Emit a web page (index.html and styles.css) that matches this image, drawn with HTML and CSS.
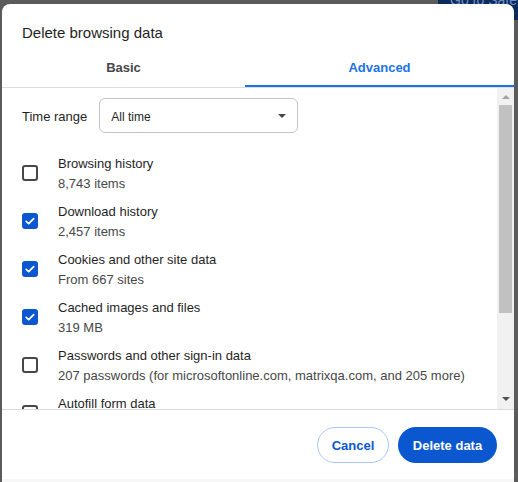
FILE: index.html
```html
<!DOCTYPE html>
<html lang="en">
<head>
    <meta charset="UTF-8" />
    <title>Delete browsing data</title>
    <link rel="stylesheet" href="styles.css">
</head>
<body>
    <div class="behind-button">Go to Safety</div>

    <div class="dialog">
        <h1 class="dialog-title">Delete browsing data</h1>

        <div class="tabs">
            <div class="tab">Basic</div>
            <div class="tab active">Advanced</div>
        </div>

        <div class="body">
            <div class="list">
                <div class="time-range">
                    <span class="time-label">Time range</span>
                    <div class="select">
                        <span>All time</span>
                        <span class="caret"></span>
                    </div>
                </div>

                <div class="item">
                    <span class="checkbox"></span>
                    <div class="item-text">
                        <div class="item-title">Browsing history</div>
                        <div class="item-sub">8,743 items</div>
                    </div>
                </div>
                <div class="item">
                    <span class="checkbox checked"><svg viewBox="0 0 16 16" width="16" height="16"><path d="M4.2 8.3l2.5 2.4 5-5" fill="none" stroke="#fff" stroke-width="1.7" stroke-linecap="round" stroke-linejoin="round"/></svg></span>
                    <div class="item-text">
                        <div class="item-title">Download history</div>
                        <div class="item-sub">2,457 items</div>
                    </div>
                </div>
                <div class="item">
                    <span class="checkbox checked"><svg viewBox="0 0 16 16" width="16" height="16"><path d="M4.2 8.3l2.5 2.4 5-5" fill="none" stroke="#fff" stroke-width="1.7" stroke-linecap="round" stroke-linejoin="round"/></svg></span>
                    <div class="item-text">
                        <div class="item-title">Cookies and other site data</div>
                        <div class="item-sub">From 667 sites</div>
                    </div>
                </div>
                <div class="item">
                    <span class="checkbox checked"><svg viewBox="0 0 16 16" width="16" height="16"><path d="M4.2 8.3l2.5 2.4 5-5" fill="none" stroke="#fff" stroke-width="1.7" stroke-linecap="round" stroke-linejoin="round"/></svg></span>
                    <div class="item-text">
                        <div class="item-title">Cached images and files</div>
                        <div class="item-sub">319 MB</div>
                    </div>
                </div>
                <div class="item">
                    <span class="checkbox"></span>
                    <div class="item-text">
                        <div class="item-title">Passwords and other sign-in data</div>
                        <div class="item-sub">207 passwords (for microsoftonline.com, matrixqa.com, and 205 more)</div>
                    </div>
                </div>
                <div class="item">
                    <span class="checkbox"></span>
                    <div class="item-text">
                        <div class="item-title">Autofill form data</div>
                        <div class="item-sub">&nbsp;</div>
                    </div>
                </div>
            </div>

            <!-- fake scrollbar -->
            <div class="scrollbar">
                <span class="arrow up"></span>
                <div class="track">
                    <div class="thumb"></div>
                </div>
                <span class="arrow down"></span>
            </div>
        </div>

        <div class="footer">
            <button class="btn btn-cancel">Cancel</button>
            <button class="btn btn-delete">Delete data</button>
        </div>
    </div>
</body>
</html>
```

FILE: styles.css
```css
body {
    margin: 0;
    height: 482px;
    overflow: hidden;
    background-color: #5b5b5b;
    font-family: 'Segoe UI', 'Liberation Sans', Arial, sans-serif;
    color: #1f1f1f;
    position: relative;
}

/* page behind the dialog */
.behind-button {
    position: absolute;
    top: -8px;
    right: 0;
    width: 80px;
    height: 28px;
    padding-left: 12px;
    box-sizing: border-box;
    background-color: #0c2a5c;
    color: #6f8fc4;
    font-size: 14px;
    line-height: 16px;
    white-space: nowrap;
    overflow: hidden;
}

.dialog {
    position: relative;
    margin: 4px 0 0 2px;
    width: 512px;
    height: 478px;
    background-color: #fff;
    border-radius: 8px 8px 0 0;
    display: flex;
    flex-direction: column;
    border-bottom: 3px solid #f7f7f7;
    box-sizing: border-box;
}

.dialog-title {
    margin: 0;
    padding: 19px 20px 0;
    font-size: 15px;
    font-weight: normal;
    line-height: 20px;
    color: #1f1f1f;
}

.tabs {
    display: flex;
    border-bottom: 1px solid #dcdcdc;
}

.tab {
    width: 243px;
    text-align: center;
    padding: 15px 0 9px;
    font-size: 13px;
    font-weight: bold;
    line-height: 20px;
    color: #474747;
}

.tab.active {
    flex: 1;
    color: #1a73e8;
    box-shadow: inset 0 -2px 0 #1a73e8;
}

.body {
    height: 321px;
    display: flex;
    border-bottom: 1px solid #dcdcdc;
}

.list {
    flex: 1;
    overflow: hidden;
    padding: 10px 0 0 20px;
}

.time-range {
    display: flex;
    align-items: center;
    gap: 12px;
    font-size: 13px;
    margin-bottom: 19px;
}

.time-label {
    padding-top: 2px;
}

.select {
    width: 199px;
    height: 35px;
    box-sizing: border-box;
    border: 1px solid #c4c4c4;
    border-radius: 6px;
    display: flex;
    align-items: center;
    justify-content: space-between;
    padding: 3px 11px 0 11px;
    font-size: 12px;
}

.caret {
    width: 0;
    height: 0;
    border-left: 4px solid transparent;
    border-right: 4px solid transparent;
    border-top: 4px solid #474747;
    margin-top: -3px;
}

.item {
    display: flex;
    align-items: center;
    gap: 20px;
    margin-bottom: 6px;
}

.checkbox {
    width: 16px;
    height: 16px;
    box-sizing: border-box;
    border: 2px solid #474747;
    border-radius: 3px;
    flex-shrink: 0;
}

.checkbox.checked {
    border: none;
    background-color: #0b57d0;
    display: flex;
}

.item-text {
    font-size: 13px;
    line-height: 20px;
    padding-top: 2px;
}

.item-title {
    color: #1f1f1f;
}

.item-sub {
    color: #474747;
}

.scrollbar {
    width: 17px;
    background-color: #f1f1f1;
    display: flex;
    flex-direction: column;
    align-items: center;
}

.arrow {
    width: 0;
    height: 0;
    border-left: 4px solid transparent;
    border-right: 4px solid transparent;
}

.arrow.up {
    border-bottom: 4px solid #a3a3a3;
    margin: 7px 0 6px;
}

.arrow.down {
    border-top: 4px solid #505050;
    margin: 6px 0 8px;
}

.track {
    flex: 1;
    width: 100%;
    padding: 0 2px;
    box-sizing: border-box;
}

.thumb {
    height: 208px;
    background-color: #c1c1c1;
}

.footer {
    display: flex;
    justify-content: flex-end;
    gap: 9px;
    padding: 17px 17px 0 0;
}

.btn {
    height: 36px;
    border-radius: 18px;
    font-family: inherit;
    font-size: 13px;
    font-weight: bold;
    cursor: pointer;
}

.btn-cancel {
    width: 72px;
    background-color: #fff;
    color: #0b57d0;
    border: 1px solid #a8c7fa;
}

.btn-delete {
    width: 99px;
    background-color: #0b57d0;
    color: #fff;
    border: none;
}
```
